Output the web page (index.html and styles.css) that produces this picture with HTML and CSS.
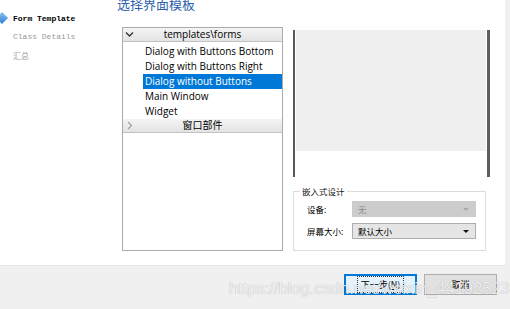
FILE: index.html
```html
<!DOCTYPE html>
<html lang="zh">
<head>
  <meta charset="UTF-8" />
  <title>新建窗体</title>
  <link rel="stylesheet" href="styles.css">
</head>
<body>
  <div class="wizard">
    <div class="content">
      <div class="steps">
        <div class="step current">
          <svg class="step-mark" width="9" height="12" viewBox="0 0 9 12">
            <defs>
              <linearGradient id="mark" x1="0" y1="0" x2="0" y2="1">
                <stop offset="0" stop-color="#8cc4f4"/>
                <stop offset="1" stop-color="#2f7fd6"/>
              </linearGradient>
            </defs>
            <polygon points="-4,6 2,0 8,6 2,12" fill="url(#mark)"/>
          </svg>
          Form Template
        </div>
        <div class="step">Class Details</div>
        <div class="step">汇总</div>
      </div>

      <div class="main">
        <div class="title">选择界面模板</div>
        <div class="panes">
          <div class="tree">
            <div class="group-head">
              <svg class="chev" width="9" height="9" viewBox="0 0 9 9">
                <polyline points="1,2.5 4.5,6 8,2.5" fill="none" stroke="#333" stroke-width="1.3"/>
              </svg>
              templates\forms
            </div>
            <ul class="items">
              <li>Dialog with Buttons Bottom</li>
              <li>Dialog with Buttons Right</li>
              <li class="selected">Dialog without Buttons</li>
              <li>Main Window</li>
              <li>Widget</li>
            </ul>
            <div class="group-head">
              <svg class="chev" width="9" height="9" viewBox="0 0 9 9">
                <polyline points="3,1 6.5,4.5 3,8" fill="none" stroke="#a0a0a0" stroke-width="1.2"/>
              </svg>
              窗口部件
            </div>
          </div>

          <div class="side">
            <div class="preview">
              <div class="preview-fill"></div>
            </div>
            <fieldset class="embedded">
              <legend>嵌入式设计</legend>
              <div class="field">
                <span class="label">设备:</span>
                <div class="combo disabled"><span>无</span><span class="arrow"></span></div>
              </div>
              <div class="field">
                <span class="label">屏幕大小:</span>
                <div class="combo"><span>默认大小</span><span class="arrow"></span></div>
              </div>
            </fieldset>
          </div>
        </div>
      </div>
    </div>

    <div class="footer">
      <button class="btn default"><span>下一步(<u>N</u>)</span></button>
      <button class="btn">取消</button>
    </div>

    <div class="watermark">https://blog.csdn.net/weixin_44192523</div>
  </div>
</body>
</html>
```

FILE: styles.css
```css
body {
  margin: 0;
  background: #f0f0f0;
  font-family: "Liberation Sans", "Noto Sans CJK SC", sans-serif;
  overflow: hidden;
}
.wizard {
  position: relative;
  width: 510px;
  height: 309px;
}
.content {
  display: flex;
  width: 505px;
  height: 265px;
  background: #fff;
  border-bottom: 1px solid #e6e6e6;
}
.steps {
  width: 117px;
  padding-top: 12px;
  font-family: "Liberation Mono", "Noto Sans CJK SC", monospace;
  font-size: 8px;
  color: #9a9a9a;
}
.step {
  display: flex;
  align-items: center;
  height: 12px;
  margin-bottom: 6.5px;
  padding-left: 13px;
}
.step.current {
  position: relative;
  color: #000;
  font-weight: bold;
}
.step-mark {
  position: absolute;
  left: 0;
  top: 0;
}
.main {
  display: flex;
  flex-direction: column;
}
.title {
  font-family: "Noto Sans CJK SC", sans-serif;
  font-size: 13px;
  line-height: 13px;
  color: #2f5fad;
  margin-top: -3px;
  height: 13px;
}
.panes {
  display: flex;
  gap: 10px;
  margin-top: 17px;
  margin-left: 5px;
}
.tree {
  box-sizing: border-box;
  width: 161px;
  height: 224px;
  border: 1px solid #a9a9ae;
  font-family: "Open Sans", "Noto Sans CJK SC", sans-serif;
  font-size: 10px;
  color: #000;
}
.group-head {
  position: relative;
  height: 13px;
  line-height: 13px;
  text-align: center;
  background: linear-gradient(#f4f4f4, #e3e3e3);
  border-bottom: 1px solid #c2c2c2;
  font-size: 10px;
}
.group-head .chev {
  position: absolute;
  left: 2px;
  top: 2px;
}
.items {
  list-style: none;
  margin: 0;
  padding: 2px 0 0 20px;
}
.items li {
  height: 15px;
  line-height: 15px;
  padding-left: 2px;
  white-space: nowrap;
}
.items li.selected {
  background: #0078d7;
  color: #fff;
}
.side {
  display: flex;
  flex-direction: column;
  width: 197px;
  padding-top: 3px;
}
.preview {
  box-sizing: border-box;
  height: 147px;
  border-left: 2px solid #575757;
  border-right: 3px solid #5d5d5d;
  padding: 0 1px;
  background: #fff;
}
.preview-fill {
  height: 121px;
  background: #efefef;
}
.embedded {
  box-sizing: border-box;
  width: 192px;
  height: 66px;
  margin: 8px 0 0;
  padding: 4px 9px 0 9px;
  border: 1px solid #dcdcdc;
  font-family: "Noto Sans CJK SC", sans-serif;
  font-size: 8.5px;
  color: #000;
}
.embedded legend {
  padding: 0 2px;
  margin-left: -3px;
  font-size: 8.5px;
  color: #222;
}
.field {
  display: flex;
  align-items: center;
  height: 16px;
  margin-bottom: 6px;
}
.label {
  width: 45px;
  padding-left: 4px;
}
.combo {
  box-sizing: border-box;
  display: flex;
  align-items: center;
  justify-content: space-between;
  width: 124px;
  height: 16px;
  padding: 0 6px 0 5px;
  background: #e5e5e5;
  border: 1px solid #adadad;
  color: #000;
}
.combo.disabled {
  background: #cccccc;
  border-color: #cccccc;
  color: #8d8d8d;
}
.arrow {
  width: 0;
  height: 0;
  border-left: 3px solid transparent;
  border-right: 3px solid transparent;
  border-top: 3px solid #111;
}
.combo.disabled .arrow {
  border-top-color: #a8a8a8;
}
.footer {
  display: flex;
  justify-content: flex-end;
  gap: 7px;
  padding: 8px 13px 0 0;
}
.btn {
  box-sizing: border-box;
  width: 73px;
  height: 21px;
  padding: 0;
  background: #e1e1e1;
  border: 1px solid #adadad;
  font-family: "Noto Sans CJK SC", sans-serif;
  font-size: 9px;
  color: #000;
}
.btn.default {
  border: 1px solid #0078d7;
  box-shadow: inset 0 0 0 1px #0078d7;
  background: #e5f1fb;
}
.btn.default span {
  display: inline-block;
  padding: 0 2px;
  outline: 1px dotted #333;
  outline-offset: 1px;
}
.watermark {
  position: absolute;
  left: 229px;
  top: 279px;
  font-family: "Liberation Sans", sans-serif;
  font-size: 16.5px;
  color: rgba(255, 255, 255, 0.85);
  text-shadow: 0 0 1px rgba(0, 0, 0, 0.35);
  white-space: nowrap;
}
```
